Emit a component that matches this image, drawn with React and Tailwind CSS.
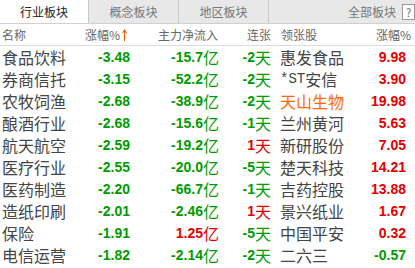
import React from "react";

const GREEN = "text-[#009b00]";
const RED = "text-[#e30000]";

const rows = [
  { name: "食品饮料", pct: "-3.48", flow: "-15.7", days: "-2", lead: "惠发食品", lpct: "9.98" },
  { name: "券商信托", pct: "-3.15", flow: "-52.2", days: "-2", lead: "*ST安信", lpct: "3.90" },
  { name: "农牧饲渔", pct: "-2.68", flow: "-38.9", days: "-2", lead: "天山生物", lpct: "19.98", hot: true },
  { name: "酿酒行业", pct: "-2.68", flow: "-15.6", days: "-1", lead: "兰州黄河", lpct: "5.63" },
  { name: "航天航空", pct: "-2.59", flow: "-19.2", days: "1", lead: "新研股份", lpct: "7.05" },
  { name: "医疗行业", pct: "-2.55", flow: "-20.0", days: "-5", lead: "楚天科技", lpct: "14.21" },
  { name: "医药制造", pct: "-2.20", flow: "-66.7", days: "-1", lead: "吉药控股", lpct: "13.88" },
  { name: "造纸印刷", pct: "-2.01", flow: "-2.46", days: "1", lead: "景兴纸业", lpct: "1.67" },
  { name: "保险", pct: "-1.91", flow: "1.25", days: "-5", lead: "中国平安", lpct: "0.32" },
  { name: "电信运营", pct: "-1.82", flow: "-2.14", days: "-2", lead: "二六三", lpct: "-0.57" },
];

const tone = (v) => (v.startsWith("-") ? GREEN : RED);
const num = "font-['Liberation_Sans',Arial,sans-serif] font-bold text-[14px] leading-none";

function SortArrow() {
  return (
    <svg width="5" height="12" viewBox="0 0 5 12" className="ml-[2px]">
      <path d="M2.5 1 V12" stroke="#f05a00" strokeWidth="1" />
      <path d="M0.5 4 L2.5 0.5 L4.5 4" stroke="#f05a00" strokeWidth="1" fill="none" />
    </svg>
  );
}

export default function App() {
  return (
    <div className="w-[415px] h-[268px] overflow-hidden bg-white font-['Noto_Sans_CJK_SC',sans-serif] text-[#4a4a4a]">
      {/* tab bar */}
      <div className="flex h-[24px] bg-[#e8e8e8] border-b border-[#d0d0d0] text-[12px]">
        <div className="w-[89px] bg-white border-r border-[#c8c8c8] flex items-center justify-center text-[#222]">行业板块</div>
        <div className="w-[90px] border-r border-[#c8c8c8] flex items-center justify-center text-[#777]">概念板块</div>
        <div className="w-[90px] border-r border-[#c8c8c8] flex items-center justify-center text-[#777]">地区板块</div>
        <div className="flex-1 flex items-center justify-end text-[#777]">
          <span>全部板块</span>
          <span className="ml-[6px] w-[13px] h-[16px] border border-[#999] bg-white text-[11px] leading-[14px] text-center text-[#666]">?</span>
        </div>
      </div>

      {/* header */}
      <div className="flex h-[22px] items-center border-b border-[#dcdcdc] text-[12px] text-[#666]">
        <div className="w-[80px] pl-[2px]">名称</div>
        <div className="w-[50px] flex items-center justify-end pr-[3px]">
          涨幅%<SortArrow />
        </div>
        <div className="w-[89px] text-right pr-[1px]">主力净流入</div>
        <div className="w-[52px] text-right">连张</div>
        <div className="w-[75px] pl-[10px]">领张股</div>
        <div className="w-[65px] text-right">涨幅%</div>
      </div>

      {/* rows */}
      {rows.map((r) => (
        <div key={r.name} className="flex h-[22px] items-center text-[16px] leading-none">
          <div className="w-[80px] pl-[2px] text-[#444]">{r.name}</div>
          <div className={`w-[50px] text-right ${num} ${tone(r.pct)}`}>{r.pct}</div>
          <div className={`w-[89px] flex items-center justify-end ${tone(r.flow)}`}>
            <span className={num}>{r.flow}</span>
            <span>亿</span>
          </div>
          <div className={`w-[52px] flex items-center justify-end ${tone(r.days)}`}>
            <span className={num}>{r.days}</span>
            <span>天</span>
          </div>
          <div className={`w-[75px] pl-[9px] flex items-center whitespace-nowrap ${r.hot ? "text-[#ff6a00]" : "text-[#444]"}`}>
            {r.lead.startsWith("*ST") ? (
              <>
                <span className="font-['Liberation_Mono',monospace] text-[14px] leading-none">*ST</span>
                <span>安信</span>
              </>
            ) : (
              r.lead
            )}
          </div>
          <div className={`w-[60px] text-right ${num} ${tone(r.lpct)}`}>{r.lpct}</div>
        </div>
      ))}
    </div>
  );
}
